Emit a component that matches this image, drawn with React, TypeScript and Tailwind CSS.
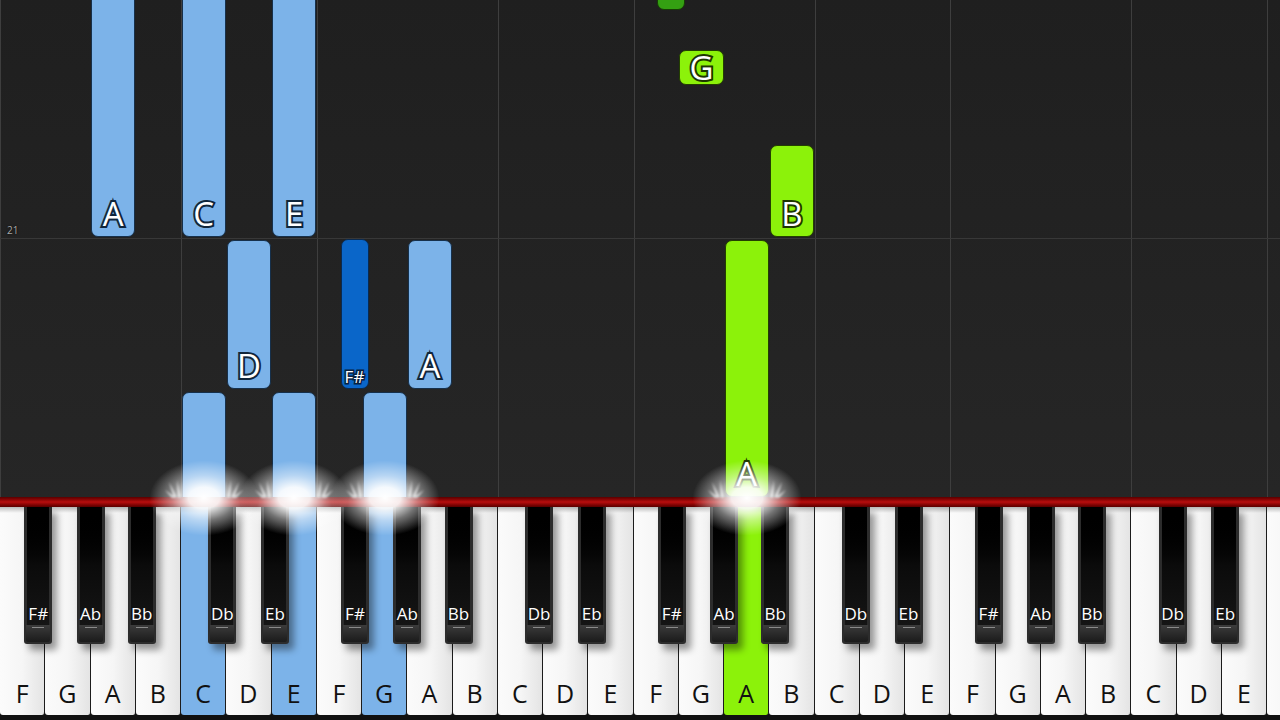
import React from "react";

const W = 45.25;
const WHITE_NAMES = ["F", "G", "A", "B", "C", "D", "E"];
const whites = Array.from({ length: 29 }, (_, i) => (i < 28 ? WHITE_NAMES[i % 7] : ""));
const pressed: Record<number, "blue" | "green"> = { 4: "blue", 6: "blue", 8: "blue", 16: "green" };

type Black = { name: string; center: number };
const blacks: Black[] = [];
for (let o = 0; o < 4; o++) {
  const b = o * 7;
  blacks.push({ name: "F#", center: (b + 1) * W - 7 });
  blacks.push({ name: "Ab", center: (b + 2) * W });
  blacks.push({ name: "Bb", center: (b + 3) * W + 6 });
  blacks.push({ name: "Db", center: (b + 5) * W - 4 });
  blacks.push({ name: "Eb", center: (b + 6) * W + 3.5 });
}

type Note = {
  left: number;
  width: number;
  top: number;
  bottom: number;
  color: "blue" | "darkblue" | "green" | "darkgreen";
  label: string;
  small?: boolean;
};

const wn = (i: number, top: number, bottom: number, color: Note["color"], label: string): Note => ({
  left: i * W + 0.5,
  width: W - 1,
  top,
  bottom,
  color,
  label,
});
const bn = (center: number, top: number, bottom: number, color: Note["color"], label: string): Note => ({
  left: center - 14,
  width: 28,
  top,
  bottom,
  color,
  label,
  small: true,
});

const notes: Note[] = [
  wn(2, -12, 237, "blue", "A"),
  wn(4, -12, 237, "blue", "C"),
  wn(6, -12, 237, "blue", "E"),
  wn(5, 240, 389, "blue", "D"),
  bn(7 * W + 38 - 0.25, 239, 389, "darkblue", "F#"),
  wn(9, 240, 389, "blue", "A"),
  wn(4, 392, 520, "blue", ""),
  wn(6, 392, 520, "blue", ""),
  wn(8, 392, 520, "blue", ""),
  bn(14 * W + 38 - 0.5, -22, 10, "darkgreen", ""),
  wn(15, 50, 85, "green", "G"),
  wn(17, 145, 237, "green", "B"),
  wn(16, 240, 497, "green", "A"),
];

const noteBg: Record<Note["color"], string> = {
  blue: "bg-[#7cb3e9] border-[#16304b]",
  darkblue: "bg-[#0a66c9] border-[#0a2a50]",
  green: "bg-[#8cf20a] border-[#233f00]",
  darkgreen: "bg-[#34a012] border-[#173d05]",
};
const noteStroke: Record<Note["color"], string> = {
  blue: "[-webkit-text-stroke:4px_#10263b]",
  darkblue: "[-webkit-text-stroke:3px_#08213f]",
  green: "[-webkit-text-stroke:4px_#1e3600]",
  darkgreen: "[-webkit-text-stroke:3px_#143205]",
};

const gridX = [0, 4, 7, 11, 14, 18, 21, 25, 28].map((k) => k * W);
const glowX = [4, 6, 8, 16].map((i) => i * W + W / 2);

function Sparkle() {
  return (
    <svg width="80" height="26" viewBox="0 0 80 26" className="opacity-70">
      <g fill="white">
        <polygon points="10,26 5,10 13,25" />
        <polygon points="14,26 13,8 17,25" />
        <polygon points="8,26 1,18 11,25" />
        <polygon points="70,26 75,10 67,25" />
        <polygon points="66,26 67,8 63,25" />
        <polygon points="72,26 79,18 69,25" />
      </g>
    </svg>
  );
}

export default function App() {
  return (
    <div className="relative w-[1280px] h-[720px] overflow-hidden bg-[#0e0e0e] font-['Open_Sans',sans-serif]">
      {/* Falling notes roll */}
      <div className="relative h-[497px] overflow-hidden bg-linear-to-b from-[#1f1f1f] to-[#262626]">
        {gridX.map((x, i) => (
          <div key={i} className="absolute top-0 bottom-0 w-[1px] bg-[#3e3e3e]" style={{ left: x }} />
        ))}
        <div className="absolute left-0 right-0 top-[238px] h-[1px] bg-[#383838]" />
        <div className="absolute left-[7px] top-[225px] text-[10px] leading-none text-[#a8a8a8] [text-shadow:0_0_2px_#000]">
          21
        </div>
        {notes.map((n, i) => (
          <div
            key={i}
            className={`absolute flex flex-col items-center rounded-[7px] border-[1.5px] ${noteBg[n.color]} ${
              n.small ? "justify-end pb-[3px]" : n.bottom - n.top < 40 ? "justify-center" : "justify-end pb-[6px]"
            }`}
            style={{ left: n.left, width: n.width, top: n.top, height: n.bottom - n.top }}
          >
            {n.label && (
              <span
                className={`leading-none text-white [paint-order:stroke_fill] ${noteStroke[n.color]} ${
                  n.small ? "text-[17px]" : "text-[33px]"
                }`}
              >
                {n.label}
              </span>
            )}
          </div>
        ))}
      </div>

      {/* Red bar */}
      <div className="h-[10px] bg-linear-to-b from-[#5a0000] via-[#b80e0e] to-[#5a0000]" />

      {/* Keyboard */}
      <div className="relative h-[213px] bg-[#111] pb-[5px]">
        <div className="flex h-full">
          {whites.map((name, i) => {
            const p = pressed[i];
            const cls =
              p === "blue"
                ? "bg-[#7cb3e9]"
                : p === "green"
                ? "bg-[#8cf20a]"
                : "bg-linear-to-r from-[#fbfbfb] via-[#f6f6f6] to-[#e4e4e4]";
            return (
              <div
                key={i}
                className={`relative shrink-0 w-[45.25px] h-full rounded-b-[3px] border-r-[1.5px] border-[#1c1c1c] flex items-end justify-center pb-[9px] ${cls}`}
              >
                <div className="absolute inset-x-0 top-0 h-[6px] bg-linear-to-b from-[rgba(0,0,0,0.25)] to-transparent" />
                {name && <span className="text-[25px] leading-none text-[#111]">{name}</span>}
              </div>
            );
          })}
        </div>
        {blacks.map((b, i) => (
          <div
            key={i}
            className="absolute top-0 h-[137px] w-[28px] rounded-b-[3px] bg-[#2c2c2c] shadow-[5px_6px_7px_rgba(0,0,0,0.4)] px-[3px]"
            style={{ left: b.center - 14 }}
          >
            <div className="h-[118px] bg-linear-to-b from-[#000] via-[#0b0b0b] to-[#151515]" />
            <div className="absolute left-[2px] right-[2px] bottom-[2px] h-[17px] rounded-b-[2px] bg-linear-to-b from-[#3c3c3c] to-[#1b1b1b]">
              <div className="mx-auto mt-[2px] h-[1px] w-[12px] bg-[#8a8a8a]" />
            </div>
            <div className="absolute left-0 right-0 top-[98px] text-center text-[17px] leading-none text-white">
              {b.name}
            </div>
          </div>
        ))}
      </div>

      {/* Glows over hit line */}
      {glowX.map((x, i) => (
        <React.Fragment key={i}>
          <div
            className="pointer-events-none absolute h-[76px] w-[110px] bg-[radial-gradient(ellipse_at_center,rgba(255,255,255,1)_0%,rgba(255,255,255,0.92)_20%,rgba(255,255,255,0.45)_42%,rgba(255,255,255,0)_70%)]"
            style={{ left: x - 55, top: 460 }}
          />
          <div className="pointer-events-none absolute blur-[1px]" style={{ left: x - 40, top: 472 }}>
            <Sparkle />
          </div>
        </React.Fragment>
      ))}
    </div>
  );
}
